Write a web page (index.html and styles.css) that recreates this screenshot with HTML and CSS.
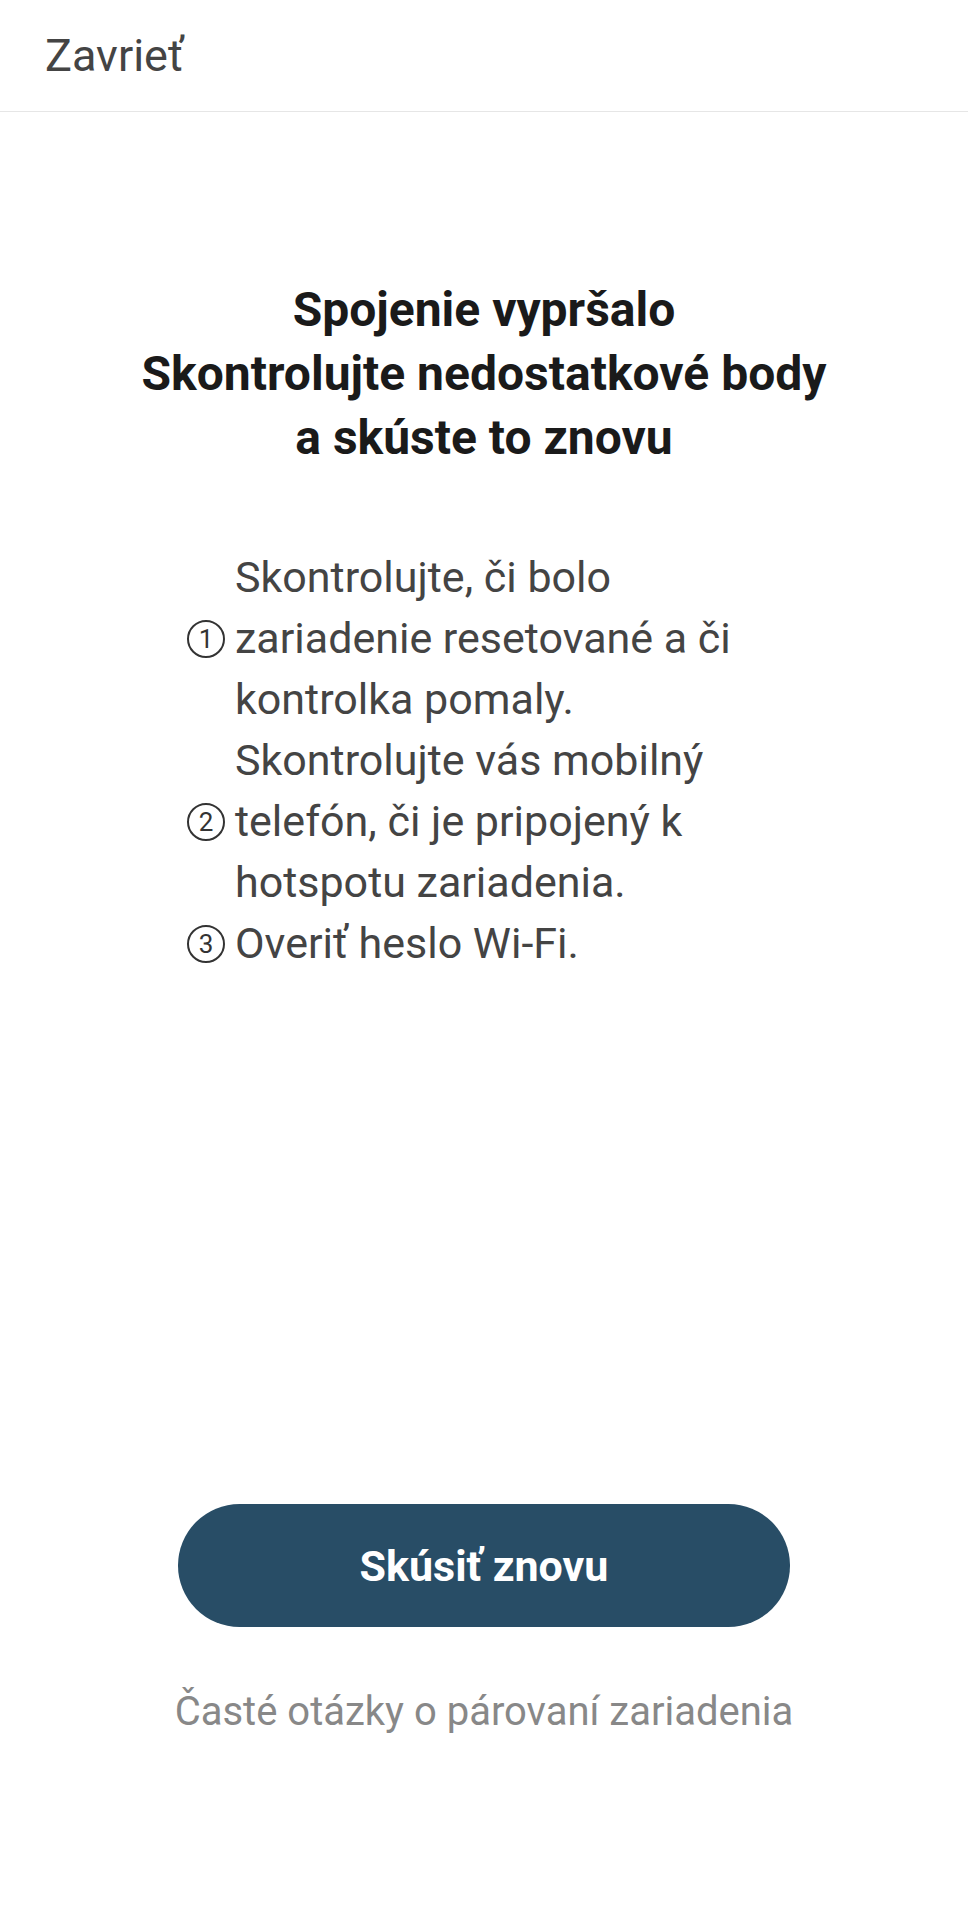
FILE: index.html
```html
<!DOCTYPE html>
<html>
	<head>
		<meta charset="utf-8" />
		<title>Spojenie vypršalo</title>
		<link rel="stylesheet" href="styles.css">
	</head>
	<body>
		<div class="top">
			<span class="close">Zavrieť</span>
		</div>
		<div class="main">
			<h1 class="title">Spojenie vypršalo<br />Skontrolujte nedostatkové body<br />a skúste to znovu</h1>
			<ul class="tips">
				<li>
					<span class="num">1</span>
					<p>Skontrolujte, či bolo zariadenie resetované a či kontrolka pomaly.</p>
				</li>
				<li>
					<span class="num">2</span>
					<p>Skontrolujte vás mobilný telefón, či je pripojený k hotspotu zariadenia.</p>
				</li>
				<li>
					<span class="num">3</span>
					<p>Overiť heslo Wi-Fi.</p>
				</li>
			</ul>
			<div class="btn">Skúsiť znovu</div>
			<p class="faq">Časté otázky o párovaní zariadenia</p>
		</div>
	</body>
</html>
```

FILE: styles.css
```css
*{
	margin:0px;
	padding:0px;
}
body{
	background: #fff;
	color: #444;
	font-family: Roboto, "Noto Sans", "Liberation Sans", sans-serif;
}
.top{
	height: 111px;
	border-bottom: 1px solid #e6e6e6;
	display: flex;
	align-items: center;
	padding-left: 45px;
}
.close{
	font-size: 45px;
	color: #444;
}
.main{
	display: flex;
	flex-direction: column;
	align-items: center;
}
.title{
	margin-top: 166px;
	font-size: 48px;
	line-height: 64px;
	font-weight: bold;
	color: #1a1a1a;
	text-align: center;
}
.tips{
	list-style: none;
	width: 594px;
	margin-top: 77px;
}
.tips li{
	display: flex;
	align-items: center;
}
.tips .num{
	width: 34px;
	height: 34px;
	flex: none;
	margin-right: 10px;
	border: 2px solid #333;
	border-radius: 50%;
	font-size: 26px;
	color: #333;
	display: flex;
	align-items: center;
	justify-content: center;
}
.tips p{
	font-size: 43px;
	line-height: 61px;
	color: #444;
}
.btn{
	margin-top: 530px;
	width: 612px;
	height: 123px;
	border-radius: 62px;
	background: #284d66;
	color: #fff;
	font-size: 43px;
	font-weight: bold;
	display: flex;
	align-items: center;
	justify-content: center;
}
.faq{
	margin-top: 60px;
	font-size: 40px;
	line-height: 50px;
	color: #888;
}
```
